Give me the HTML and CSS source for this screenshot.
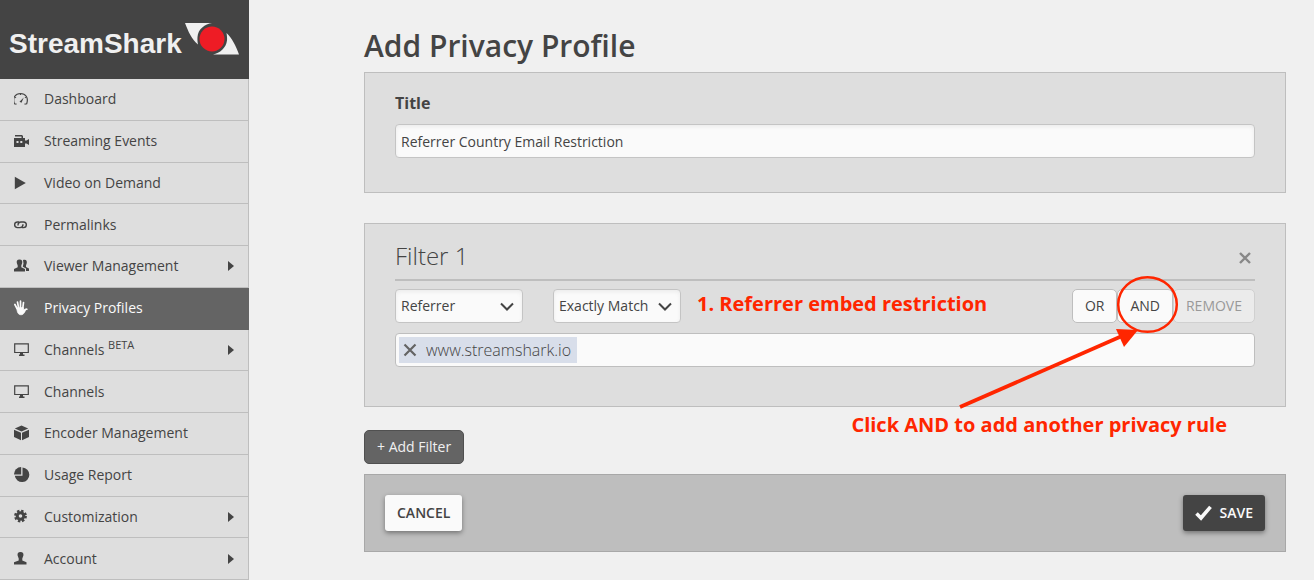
FILE: index.html
```html
<!DOCTYPE html>
<html lang="en">
<head>
    <meta charset="UTF-8">
    <meta name="viewport" content="width=device-width, initial-scale=1.0">
    <title>StreamShark - Add Privacy Profile</title>
    <link rel="stylesheet" href="styles.css">
</head>
<body>

<aside class="sidebar">
    <a href="#" class="logo">
        <span class="logo-text">StreamShark</span>
        <svg class="logo-mark" width="54" height="34" viewBox="0 0 54 34">
            <path d="M0 1H27C20 2 13 7 12.500 15 12.300 18 12.500 20 13 22.500 7 18 3 9 0 1Z" fill="#f0f0f0"/>
            <path d="M54 32.500H28C35 31 41 26 42 18.500 42.200 16 42 14 41.500 11 47 16 51 24 54 32.500Z" fill="#f0f0f0"/>
            <circle cx="27" cy="17" r="12.500" fill="#ee1c25"/>
        </svg>
    </a>
    <nav class="menu">
        <a href="#">
            <svg class="icon" viewBox="0 0 16 16" fill="none" stroke="currentColor" stroke-width="1.200"><path d="M2.500 13.200.4 12.800C-1.800 6.500 1.500 2.500 6.500 2.500S14.800 6.500 12.700 12.800L10.500 13.200M1.200 6.200 2 6.700M11.800 6.200 11 6.700M6.500 2.700V4"/><path d="M5.500 10.800 9.800 6.500 7.500 11.800Z" fill="currentColor" stroke="none"/></svg>
            <span>Dashboard</span>
        </a>
        <a href="#">
            <svg class="icon" viewBox="0 0 16 16" fill="currentColor"><path fill-rule="evenodd" d="M1 2H8L9 3V5H11V7.500L12.500 7.500 15 6V12L12.500 10.500 11 10.500V14H0V5H7.500V3.500H1ZM2.500 8V10H4.500V8ZM6.300 8V10H8.300V8Z"/></svg>
            <span>Streaming Events</span>
        </a>
        <a href="#">
            <svg class="icon" viewBox="0 0 16 16" fill="currentColor"><path d="M.8 1.800 11.800 8 .8 14.200Z"/></svg>
            <span>Video on Demand</span>
        </a>
        <a href="#">
            <svg class="icon" viewBox="0 0 16 16" fill="none" stroke="currentColor" stroke-width="1.400"><path d="M4 8.500C4 6.500 5.200 5 7 5H9.500C13.300 5 13.300 10.600 9.500 10.600H7.800"/><path d="M9 7.300C9 9.300 7.800 10.600 6 10.600H3.500C-.3 10.600-.3 5 3.500 5H5"/></svg>
            <span>Permalinks</span>
        </a>
        <a href="#">
            <svg class="icon" viewBox="0 0 16 16" fill="currentColor"><path d="M5.500 1.500C8 1.500 8.500 3 8.200 5L7.300 7.500V9.200L11 11V13.500H0V11L3.700 9.200V7.500L2.800 5C2.500 3 3 1.500 5.500 1.500Z"/><path d="M9 2C12.500 1.200 13 3 12.800 5L12 7.500V9L15 10.500V13H12V10.500L8.800 8.800 9.500 5.500Z"/></svg>
            <span>Viewer Management</span>
            <i class="arrow"></i>
        </a>
        <a href="#" class="active">
            <svg class="icon" viewBox="0 0 16 16" fill="none" stroke="currentColor" stroke-width="1.700" stroke-linecap="round"><path d="M3 8.500.9 4.500M4.500 7.500 3.500 2.200M6.500 7.500V1.200M8.800 8 9.500 2.500M9.500 12C10.500 10 12 9 12.800 9.300"/><path d="M3 8 9.300 7.500 10 10.500 11.500 10.500C10 13 9.500 14.800 7 14.800S3.500 13 3 10Z" fill="currentColor" stroke-width=".8"/></svg>
            <span>Privacy Profiles</span>
        </a>
        <a href="#">
            <svg class="icon" viewBox="0 0 16 16" fill="none" stroke="currentColor" stroke-width="1.200"><path d="M.7 1.800H14.300V10.500H.7Z"/><path d="M6 11H9V12.500H10.500V14H5V12.500H6Z" fill="currentColor" stroke="none"/></svg>
            <span>Channels <sup>BETA</sup></span>
            <i class="arrow"></i>
        </a>
        <a href="#">
            <svg class="icon" viewBox="0 0 16 16" fill="none" stroke="currentColor" stroke-width="1.200"><path d="M.7 1.800H14.300V10.500H.7Z"/><path d="M6 11H9V12.500H10.500V14H5V12.500H6Z" fill="currentColor" stroke="none"/></svg>
            <span>Channels</span>
        </a>
        <a href="#">
            <svg class="icon" viewBox="0 0 16 16" fill="currentColor"><path d="M7.500.5 14.200 3.500 7.500 6.500.8 3.500ZM0 4.700 7 7.800V15.200L0 12ZM15 4.700 8 7.800V15.200L15 12Z"/></svg>
            <span>Encoder Management</span>
        </a>
        <a href="#">
            <svg class="icon" viewBox="0 0 16 16" fill="currentColor"><path d="M8.500.5A7.300 7.300 0 1 1 .8 8.800H8.500Z"/><path d="M7.200 0V7.500H0A7.300 7.300 0 0 1 7.200 0Z"/></svg>
            <span>Usage Report</span>
        </a>
        <a href="#">
            <svg class="icon" viewBox="0 0 16 16" fill="none" stroke="currentColor"><circle cx="6.500" cy="7" r="3.300" stroke-width="3"/><circle cx="6.500" cy="7" r="5.300" stroke-width="2.200" stroke-dasharray="2.400 1.763"/></svg>
            <span>Customization</span>
            <i class="arrow"></i>
        </a>
        <a href="#">
            <svg class="icon" viewBox="0 0 16 16" fill="currentColor"><path d="M6.500 1C9 1 9.700 2.500 9.400 4.500L8.300 7.500V9.500L12.500 11.300V13.500H0V11.300L4.700 9.500V7.500L3.600 4.500C3.300 2.500 4 1 6.500 1Z"/></svg>
            <span>Account</span>
            <i class="arrow"></i>
        </a>
    </nav>
</aside>

<main class="content">
    <h1>Add Privacy Profile</h1>
    <form>
        <section class="panel title-panel">
            <label for="title">Title</label>
            <input type="text" id="title" class="field" value="Referrer Country Email Restriction">
        </section>

        <section class="panel filter-panel">
            <div class="filter-header">
                <h2>Filter 1</h2>
                <button type="button" class="close" aria-label="Remove filter">
                    <svg width="12" height="12" viewBox="0 0 12 12" stroke="currentColor" stroke-width="2.400"><path d="M1 1 11 11M11 1 1 11"/></svg>
                </button>
            </div>
            <div class="filter-row">
                <select class="field" aria-label="Filter type">
                    <option>Referrer</option>
                </select>
                <select class="field" aria-label="Match type">
                    <option>Exactly Match</option>
                </select>
                <strong class="note">1. Referrer embed restriction</strong>
                <div class="rule-buttons">
                    <button type="button" class="btn">OR</button>
                    <button type="button" class="btn">AND</button>
                    <button type="button" class="btn" disabled>REMOVE</button>
                </div>
            </div>
            <div class="field tags">
                <span class="tag">
                    <button type="button" aria-label="Remove www.streamshark.io">
                        <svg width="14" height="14" viewBox="0 0 14 14" stroke="currentColor" stroke-width="2.200"><path d="M1.500 1.500 12.500 12.500M12.500 1.500 1.500 12.500"/></svg>
                    </button>
                    www.streamshark.io
                </span>
                <input type="text" aria-label="Add referrer">
            </div>

            <!-- walkthrough hint drawn over the filter -->
            <svg class="hint-arrow" width="240" height="145" viewBox="0 0 240 145">
                <ellipse cx="197.500" cy="34.500" rx="29.300" ry="27.300" fill="none" stroke="#ff2600" stroke-width="2.500"/>
                <path d="M10 137 172 66" stroke="#ff2600" stroke-width="3.800"/>
                <path d="M188 60 166 59 174 77Z" fill="#ff2600"/>
            </svg>
            <strong class="note hint-text">Click AND to add another privacy rule</strong>
        </section>

        <button type="button" class="btn add-filter">+ Add Filter</button>

        <div class="actions">
            <button type="button" class="action cancel">CANCEL</button>
            <button type="submit" class="action save">
                <svg width="17" height="16" viewBox="0 0 17 16" fill="none" stroke="currentColor" stroke-width="3.600"><path d="M1.500 8.500 6 13 15.500 1.800"/></svg>
                SAVE
            </button>
        </div>
    </form>
</main>

</body>
</html>
```
FILE: styles.css
```css
* {
    box-sizing: border-box;
}
body {
    display: flex;
    margin: 0;
    background: #f0f0f0;
    color: #444;
    font-family: "Open Sans", sans-serif;
    font-size: 14px;
    line-height: 20px;
}
button, input, select {
    font: inherit;
    color: inherit;
}
.sidebar {
    flex: 0 0 249px;
}
.logo {
    display: flex;
    align-items: flex-start;
    height: 79px;
    padding: 22px 0 0 9px;
    background: #444;
    color: #f0f0f0;
    text-decoration: none;
}
.logo-text {
    width: 176px;
    padding-top: 2px;
    font: bold 28px/40px "Liberation Sans", sans-serif;
}
.logo-mark {
    flex: none;
}
.menu {
    display: grid;
    grid-template-rows: repeat(12, 1fr);
    height: 501px;
}
.menu a {
    display: flex;
    align-items: center;
    padding: 0 14px;
    border-right: 1px solid #bebebe;
    border-bottom: 1px solid #bebebe;
    background: #dedede;
    color: #444;
    text-decoration: none;
}
.menu a.active {
    background: #646464;
    border-color: #646464;
    color: #fafafa;
}
.menu sup {
    font-size: 11px;
    line-height: 0;
}
.icon {
    width: 16px;
    height: 16px;
    margin-right: 14px;
}
.arrow {
    margin-left: auto;
    border: 5px solid transparent;
    border-left: 6px solid #444;
    border-right: 0;
}
.content {
    flex: 1;
    padding: 26px 28px 28px 115px;
}
h1 {
    margin: 0 0 6px;
    font-size: 30px;
    font-weight: 600;
    line-height: 40px;
}
.panel {
    position: relative;
    margin-bottom: 30px;
    padding: 20px 30px;
    background: #dedede;
    border: 1px solid #bebebe;
}
.field {
    height: 34px;
    border: 1px solid #c4c4c4;
    border-radius: 4px;
    background: #fafafa;
    box-shadow: inset 0 2px 4px rgba(0,0,0,0.06);
}
.title-panel {
    padding-bottom: 34px;
}
.title-panel label {
    display: block;
    margin-bottom: 11px;
    font-size: 16px;
    font-weight: bold;
}
.title-panel .field {
    display: block;
    width: 100%;
    padding: 0 5px;
}
.filter-panel {
    margin-bottom: 23px;
    padding: 16px 30px 39px;
}
.filter-header {
    display: flex;
    align-items: flex-start;
    justify-content: space-between;
    height: 41px;
    margin-bottom: 8px;
    border-bottom: 2px solid #bebebe;
}
h2 {
    margin: 0;
    font-size: 24px;
    font-weight: 300;
    line-height: 32px;
}
.close {
    display: flex;
    padding: 12px 4px;
    border: 0;
    background: none;
    color: #888;
}
.filter-row {
    display: flex;
    gap: 30px;
    margin-bottom: 10px;
}
select.field {
    width: 128px;
    padding: 0 5px;
    appearance: none;
    background: #fafafa url("data:image/svg+xml,%3Csvg xmlns='http://www.w3.org/2000/svg' width='14' height='9' fill='none' stroke='%23444' stroke-width='2'%3E%3Cpath d='M1 1.500 7 7.500 13 1.500'/%3E%3C/svg%3E") no-repeat right 8px center;
}
.note {
    color: #ff2600;
    font-size: 20px;
    line-height: 30px;
    white-space: nowrap;
}
.filter-row .note {
    margin-left: -14px;
}
.rule-buttons {
    display: flex;
    margin-left: auto;
}
.btn {
    height: 34px;
    padding: 0 12px;
    border: 1px solid #bebebe;
    border-radius: 5px;
    background: #fafafa;
}
.btn:disabled {
    background: #ebebeb;
    border-color: #d0d0d0;
    color: #999;
}
.tags {
    display: flex;
    padding: 3px;
    border-color: #bebebe;
    box-shadow: none;
}
.tag {
    display: flex;
    align-items: center;
    padding: 0 6px 0 4px;
    background: #d8deea;
    font-size: 16px;
    font-weight: 300;
}
.tag button {
    display: flex;
    margin-right: 9px;
    padding: 0;
    border: 0;
    background: none;
    color: #646464;
}
.tags input {
    flex: 1;
    border: 0;
    background: none;
}
.hint-arrow {
    position: absolute;
    top: 46px;
    right: 95px;
    pointer-events: none;
}
.hint-text {
    position: absolute;
    top: 186px;
    right: 58px;
}
.add-filter {
    display: block;
    margin-bottom: 10px;
    background: #646464;
    border-color: #505050;
    color: #f0f0f0;
}
.actions {
    display: flex;
    justify-content: space-between;
    padding: 20px;
    background: #bebebe;
    border: 1px solid #a8a8a8;
}
.action {
    display: flex;
    align-items: center;
    gap: 8px;
    height: 36px;
    padding: 0 12px;
    border: 0;
    border-radius: 3px;
    font-weight: 600;
    box-shadow: 0 2px 5px rgba(0,0,0,0.4);
}
.cancel {
    background: #fafafa;
}
.save {
    background: #444;
    color: #fafafa;
}
```
